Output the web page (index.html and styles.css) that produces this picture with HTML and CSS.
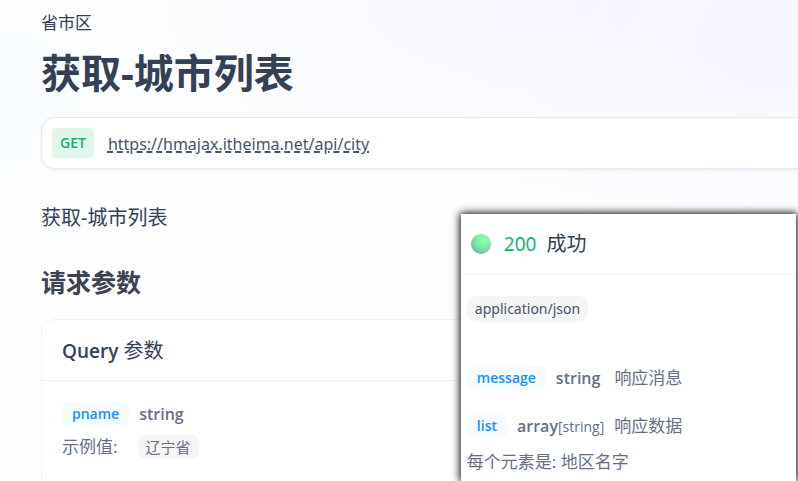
FILE: index.html
```html
<!DOCTYPE html>
<html lang="zh-CN">
<head>
<meta charset="utf-8">
<meta name="viewport" content="width=device-width, initial-scale=1">
<title>获取-城市列表</title>
<link rel="stylesheet" href="styles.css">
</head>
<body>
<main class="doc">
  <p class="group">省市区</p>
  <h1 class="title">获取-城市列表</h1>
  <div class="endpoint">
    <span class="method">GET</span>
    <a class="url" href="https://hmajax.itheima.net/api/city">https://hmajax.itheima.net/api/city</a>
  </div>
  <p class="summary">获取-城市列表</p>
  <h2 class="section-title">请求参数</h2>
  <section class="card">
    <h3 class="card-title"><span class="card-kind">Query</span> 参数</h3>
    <div class="card-body">
      <div class="field">
        <span class="name">pname</span>
        <strong class="type">string</strong>
      </div>
      <div class="example">
        <span>示例值:</span>
        <span class="example-value">辽宁省</span>
      </div>
    </div>
  </section>
</main>
<aside class="response">
  <header class="status">
    <span class="dot"></span>
    <span class="code">200</span>
    <span>成功</span>
  </header>
  <div class="response-body">
    <span class="mime">application/json</span>
    <div class="field">
      <span class="name">message</span>
      <strong class="type">string</strong>
      <span class="desc">响应消息</span>
    </div>
    <div class="field">
      <span class="name">list</span>
      <span><strong class="type">array</strong><span class="item-type">[string]</span></span>
      <span>响应数据</span>
    </div>
    <p class="note">每个元素是: 地区名字</p>
  </div>
</aside>
</body>
</html>
```
FILE: styles.css
```css
* {
  box-sizing: border-box;
}

body {
  position: relative;
  height: 100vh;
  margin: 0;
  overflow: hidden;
  color: #344054;
  font-family: "Noto Sans", "Noto Sans CJK SC", sans-serif;
  font-size: 17px;
  line-height: 24px;
  background:
    radial-gradient(ellipse 45% 50% at 100% 8%, #f8f4fe, transparent),
    radial-gradient(ellipse 60% 45% at 68% 0, #f6f8ff, transparent),
    radial-gradient(ellipse 30% 40% at 0 20%, #f9fdff, transparent),
    #fefeff;
}

h1, h2, h3, p {
  margin: 0;
}

.doc {
  padding: 11px 0 0 41px;
}

.title {
  margin-top: 10px;
  font-size: 40px;
  font-weight: 700;
  line-height: 56px;
}

.endpoint {
  display: flex;
  align-items: center;
  gap: 14px;
  height: 52px;
  margin-top: 16px;
  padding: 0 10px;
  border: 1px solid #e9e9ee;
  border-right: 0;
  border-radius: 14px 0 0 14px;
  background: #fff;
  box-shadow: 0 1px 3px rgba(16, 24, 40, 0.06);
}

.method {
  padding: 3px 8px;
  border-radius: 4px;
  color: #17b26a;
  background: #e2f5ec;
  font-family: "Open Sans", sans-serif;
  font-size: 14px;
  font-weight: 600;
}

.url {
  padding-top: 2px;
  color: #475467;
  font-size: 16px;
  text-decoration: underline dashed 2px;
}

.summary {
  margin-top: 35px;
  font-size: 20px;
  line-height: 28px;
}

.section-title {
  margin-top: 32px;
  color: #3d4350;
  font-size: 25px;
  line-height: 36px;
}

.card {
  margin-top: 19px;
  border: 1px solid #f1f1f4;
  border-radius: 14px;
  background: #fff;
}

.card-title {
  padding: 17px 20px 15px;
  border-bottom: 1px solid #f1f1f4;
  font-size: 20px;
  font-weight: 400;
  line-height: 28px;
}

.card-kind {
  font-family: "Open Sans", sans-serif;
  font-size: 19px;
  font-weight: 600;
}

.card-body {
  padding: 20px 20px 32px;
  color: #667085;
}

.field {
  display: flex;
  align-items: center;
  gap: 10px;
}

.name {
  padding: 1px 10px;
  border-radius: 8px;
  color: #1890ff;
  background: #f5fbff;
  font-family: "Open Sans", sans-serif;
  font-size: 14px;
  font-weight: 600;
}

.type {
  font-family: "Open Sans", sans-serif;
  font-size: 16px;
  font-weight: 600;
}

.example {
  display: flex;
  align-items: center;
  gap: 20px;
  margin-top: 8px;
}

.example-value {
  padding: 0 8px;
  border-radius: 7px;
  background: #f5f5f6;
  font-size: 15px;
}

.response {
  position: absolute;
  top: 214px;
  right: 2px;
  bottom: 0;
  width: 42vw;
  background: #fff;
  box-shadow: 0 0 8px 1px #000;
}

.status {
  display: flex;
  align-items: center;
  gap: 10px;
  height: 61px;
  padding: 0 10px;
  border-bottom: 1px solid #f1f1f4;
  font-size: 20px;
}

.dot {
  width: 20px;
  height: 20px;
  margin-right: 3px;
  border-radius: 50%;
  background: radial-gradient(circle at 65% 30%, #8dffb5, #7eeaa6 40%, #64a69a);
}

.code {
  color: #17b26a;
  font-size: 19px;
}

.response-body {
  display: flex;
  flex-direction: column;
  align-items: flex-start;
  gap: 22px;
  padding: 21px 6px 0;
  color: #667085;
}

.mime {
  margin-bottom: 21px;
  padding: 1px 8px;
  border-radius: 9px;
  color: #475467;
  background: #f5f5f6;
  font-size: 14px;
}

.desc {
  margin-left: 4px;
}

.item-type {
  font-family: "Open Sans", sans-serif;
  font-size: 14px;
}

.note {
  margin-top: -11px;
}
```
